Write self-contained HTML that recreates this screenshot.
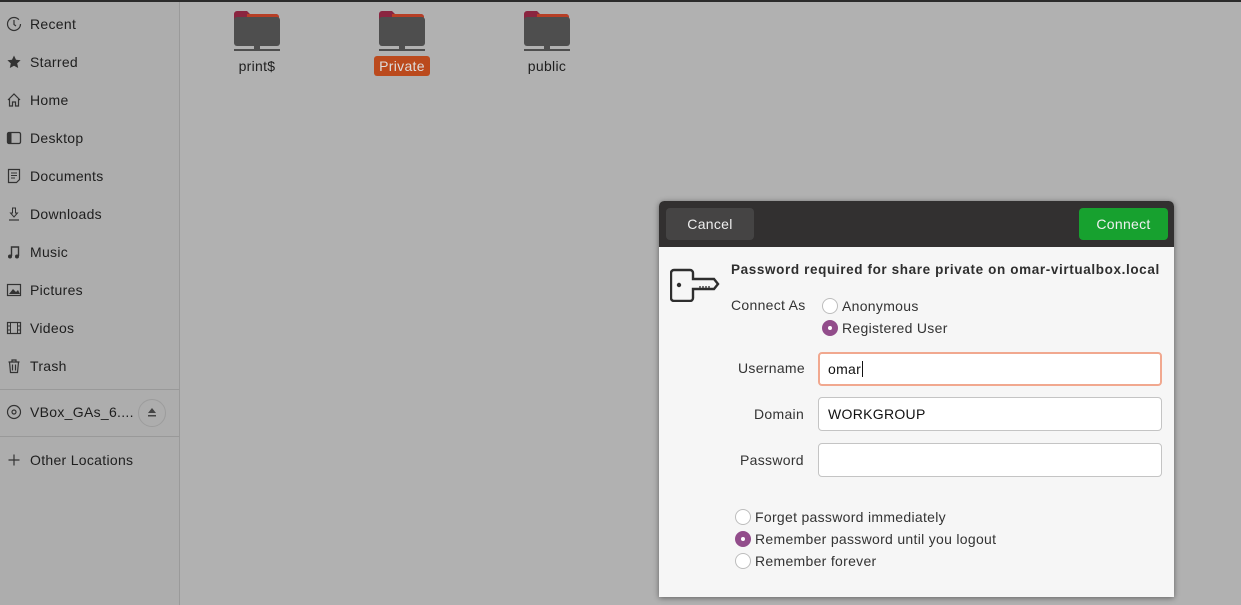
<!DOCTYPE html>
<html><head><meta charset="utf-8"><style>
*{margin:0;padding:0;box-sizing:border-box}
body{width:1241px;height:605px;background:#b1b1b1;font-family:"Liberation Sans",sans-serif;position:relative;overflow:hidden;color:#222;letter-spacing:0.3px}
.top{position:absolute;left:0;top:0;width:1241px;height:2px;background:#2b2b2b}
.side{position:absolute;left:0;top:2px;width:180px;height:603px;background:#adadad;border-right:1px solid #9a9a9a}
.it{position:absolute;left:30px;font-size:14px;color:#1e1e1e;margin-top:1px}
.ic{position:absolute;left:6px;width:16px;height:16px}
.sep{position:absolute;left:0;width:180px;height:1px;background:#999}
.fold{position:absolute;width:48px;height:44px}
.lbl{position:absolute;font-size:14px;color:#1e1e1e;text-align:center}
.dlg{position:absolute;left:659px;top:201px;width:515px;height:396px;background:#f6f6f6;border-radius:5px 5px 0 0;box-shadow:0 1px 6px rgba(0,0,0,.45);overflow:hidden}
.hdr{position:absolute;left:0;top:0;width:515px;height:46px;background:#323030}
.btn{position:absolute;top:7px;height:32px;border-radius:4px;color:#eee;font-size:14px;text-align:center;line-height:32px}
.t{position:absolute;font-size:14px;color:#333;margin-top:1px}
.in{position:absolute;left:159px;width:344px;height:34px;background:#fff;border:1px solid #c4c4c4;border-radius:4px;font-size:14px;line-height:32px;padding-left:9px;color:#111}
.r{position:absolute;width:16px;height:16px;border-radius:50%;border:1px solid #bdbdbd;background:#fff}
.r.on{background:#924d8b;border-color:#924d8b}
.r.on::after{content:"";position:absolute;left:5px;top:5px;width:4px;height:4px;border-radius:50%;background:#fff}
</style></head><body>
<div class="top"></div>
<div class="side">
<svg class="ic" style="top:14px" viewBox="0 0 16 16"><circle cx="8" cy="8" r="6.5" fill="none" stroke="#333" stroke-width="1.2" stroke-dasharray="36 5"/><path d="M8 4v4.5l2 1.5" stroke="#333" stroke-width="1.2" fill="none"/></svg>
<div class="it" style="top:13px">Recent</div>
<svg class="ic" style="top:52px" viewBox="0 0 16 16"><path d="M8 1.5l2 4.3 4.6.5-3.4 3.1 1 4.6L8 11.7 3.8 14l1-4.6L1.4 6.3l4.6-.5z" fill="#333"/></svg>
<div class="it" style="top:51px">Starred</div>
<svg class="ic" style="top:90px" viewBox="0 0 16 16"><path d="M2 8L8 2l6 6M3.5 7v7h3v-4h3v4h3V7" fill="none" stroke="#333" stroke-width="1.2"/></svg>
<div class="it" style="top:89px">Home</div>
<svg class="ic" style="top:128px" viewBox="0 0 16 16"><rect x="1.5" y="2.5" width="13" height="11" rx="1.5" fill="none" stroke="#333" stroke-width="1.3"/><rect x="1.5" y="2.5" width="4" height="11" fill="#333"/></svg>
<div class="it" style="top:127px">Desktop</div>
<svg class="ic" style="top:166px" viewBox="0 0 16 16"><path d="M2.5 1.5h11v10l-3 3h-8z" fill="none" stroke="#333" stroke-width="1.2"/><path d="M5 5h6M5 7.5h6M5 10h4" stroke="#333"/></svg>
<div class="it" style="top:165px">Documents</div>
<svg class="ic" style="top:204px" viewBox="0 0 16 16"><path d="M6.5 2h3v5h2L8 11 4.5 7h2z" fill="none" stroke="#333"/><path d="M3 14h10" stroke="#333" stroke-width="1.2"/></svg>
<div class="it" style="top:203px">Downloads</div>
<svg class="ic" style="top:242px" viewBox="0 0 16 16"><path d="M5.5 12V3h7v9" fill="none" stroke="#333" stroke-width="1.4"/><circle cx="4" cy="12.5" r="2" fill="#333"/><circle cx="11" cy="12.5" r="2" fill="#333"/></svg>
<div class="it" style="top:241px">Music</div>
<svg class="ic" style="top:280px" viewBox="0 0 16 16"><rect x="1.5" y="2.5" width="13" height="11" fill="none" stroke="#333" stroke-width="1.2"/><path d="M3 12l4-5 3 3 2-2 2 4z" fill="#333"/></svg>
<div class="it" style="top:279px">Pictures</div>
<svg class="ic" style="top:318px" viewBox="0 0 16 16"><rect x="1.5" y="2.5" width="13" height="11" fill="none" stroke="#333" stroke-width="1.2"/><path d="M4.5 2.5v11M11.5 2.5v11M1.5 6h3M1.5 10h3M11.5 6h3M11.5 10h3" stroke="#333"/></svg>
<div class="it" style="top:317px">Videos</div>
<svg class="ic" style="top:356px" viewBox="0 0 16 16"><path d="M2.5 4h11M6 4V2h4v2M3.5 4l1 10.5h7l1-10.5M6.5 6.5v6M9.5 6.5v6" fill="none" stroke="#333" stroke-width="1.2"/></svg>
<div class="it" style="top:355px">Trash</div>
<div class="sep" style="top:387px"></div>
<svg class="ic" style="top:402px" viewBox="0 0 16 16"><circle cx="8" cy="8" r="6.5" fill="none" stroke="#333" stroke-width="1.2"/><circle cx="8" cy="8" r="2" fill="none" stroke="#333" stroke-width="1.2"/></svg>
<div class="it" style="top:401px">VBox_GAs_6....</div>
<div style="position:absolute;left:138px;top:397px;width:28px;height:28px;border-radius:50%;border:1px solid #9c9c9c"></div>
<svg style="position:absolute;left:146px;top:404px" width="12" height="12" viewBox="0 0 12 12"><path d="M2 7l4-5 4 5z M2 9h8v1.5H2z" fill="#444"/></svg>
<div class="sep" style="top:434px"></div>
<svg class="ic" style="top:450px" viewBox="0 0 16 16"><path d="M8 2.5v11M2.5 8h11" stroke="#333" stroke-width="1.2"/></svg>
<div class="it" style="top:449px">Other Locations</div>
</div>

<svg class="fold" style="left:233px;top:10px" viewBox="0 0 48 44"><path d="M1 4a3 3 0 013-3h10l3 3h26a3 3 0 013 3v24H1z" fill="#8a2540"/><path d="M14 4h29a3 3 0 013 3v10H14z" fill="#c2461f" opacity=".8"/><rect x="1" y="7" width="46" height="29" rx="3" fill="#4e4e4e"/><path d="M1 40h46" stroke="#4e4e4e" stroke-width="2"/><rect x="21" y="36" width="6" height="5" fill="#4e4e4e"/></svg>
<svg class="fold" style="left:378px;top:10px" viewBox="0 0 48 44"><path d="M1 4a3 3 0 013-3h10l3 3h26a3 3 0 013 3v24H1z" fill="#8a2540"/><path d="M14 4h29a3 3 0 013 3v10H14z" fill="#c2461f" opacity=".8"/><rect x="1" y="7" width="46" height="29" rx="3" fill="#4e4e4e"/><path d="M1 40h46" stroke="#4e4e4e" stroke-width="2"/><rect x="21" y="36" width="6" height="5" fill="#4e4e4e"/></svg>
<svg class="fold" style="left:523px;top:10px" viewBox="0 0 48 44"><path d="M1 4a3 3 0 013-3h10l3 3h26a3 3 0 013 3v24H1z" fill="#8a2540"/><path d="M14 4h29a3 3 0 013 3v10H14z" fill="#c2461f" opacity=".8"/><rect x="1" y="7" width="46" height="29" rx="3" fill="#4e4e4e"/><path d="M1 40h46" stroke="#4e4e4e" stroke-width="2"/><rect x="21" y="36" width="6" height="5" fill="#4e4e4e"/></svg>
<div class="lbl" style="left:227px;top:58px;width:60px">print$</div>
<div class="lbl" style="left:374px;top:56px;width:56px;height:20px;line-height:20px;background:#bb4a1d;color:#ddd;border-radius:3px">Private</div>
<div class="lbl" style="left:517px;top:58px;width:60px">public</div>

<div class="dlg">
<div class="hdr">
<div class="btn" style="left:7px;width:88px;background:#454444">Cancel</div>
<div class="btn" style="left:420px;width:89px;background:#17a12f;color:#f0f0f0">Connect</div>
</div>
<svg style="position:absolute;left:11px;top:67px" width="50" height="34" viewBox="0 0 50 34"><path d="M4 2h16a3 3 0 013 3v6h21l4 5-4 5H23v9a3 3 0 01-3 3H4a3 3 0 01-3-3V5a3 3 0 013-3z" fill="none" stroke="#2e2e2e" stroke-width="2.4"/><circle cx="9" cy="17" r="2.2" fill="#2e2e2e"/><path d="M30 21v-3M33 21v-3M36 21v-3M39 21v-3" stroke="#2e2e2e" stroke-width="1.3"/></svg>
<div class="t" style="left:72px;top:60px;font-weight:bold;font-size:13.5px;color:#2e2e2e;letter-spacing:0.62px">Password required for share private on omar-virtualbox.local</div>
<div class="t" style="left:72px;top:95px">Connect As</div>
<div class="r" style="left:163px;top:97px"></div><div class="t" style="left:183px;top:96px">Anonymous</div>
<div class="r on" style="left:163px;top:119px"></div><div class="t" style="left:183px;top:118px">Registered User</div>
<div class="t" style="left:79px;top:158px">Username</div>
<div class="in" style="top:151px;border:2px solid #f1a88f;line-height:30px;padding-left:8px">omar<span style="border-left:1px solid #111;margin-left:1px"></span></div>
<div class="t" style="left:95px;top:204px">Domain</div>
<div class="in" style="top:196px">WORKGROUP</div>
<div class="t" style="left:81px;top:250px">Password</div>
<div class="in" style="top:242px"></div>
<div class="r" style="left:76px;top:308px"></div><div class="t" style="left:96px;top:307px">Forget password immediately</div>
<div class="r on" style="left:76px;top:330px"></div><div class="t" style="left:96px;top:329px">Remember password until you logout</div>
<div class="r" style="left:76px;top:352px"></div><div class="t" style="left:96px;top:351px">Remember forever</div>
</div>
</body></html>
